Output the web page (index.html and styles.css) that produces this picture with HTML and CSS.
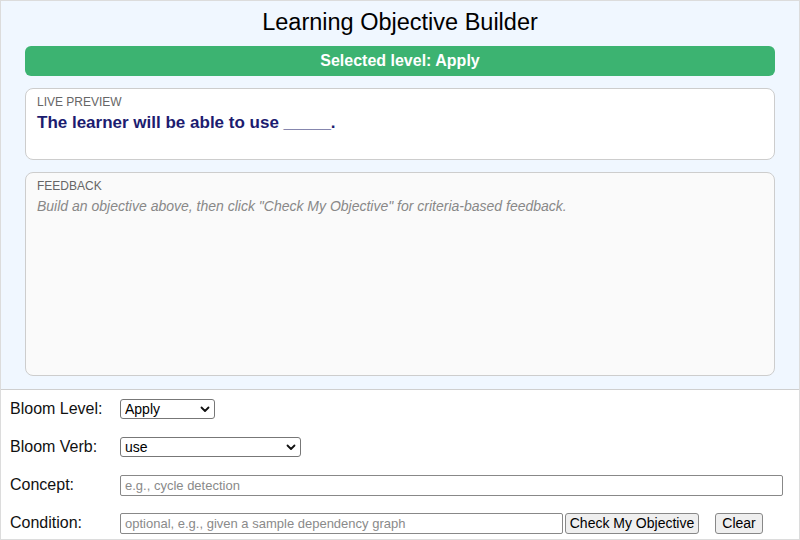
FILE: index.html
```html
<!DOCTYPE html>
<html lang="en">
<head>
  <meta charset="UTF-8">
  <meta name="viewport" content="width=device-width, initial-scale=1.0">
  <title>Learning Objective Builder</title>
  <link rel="stylesheet" href="styles.css">
</head>
<body>
  <div class="app">
    <div class="stage">
      <h1 class="title">Learning Objective Builder</h1>
      <div class="level-bar">Selected level: Apply</div>

      <div class="panel preview">
        <div class="panel-label">LIVE PREVIEW</div>
        <div class="preview-text">The learner will be able to use _____.</div>
      </div>

      <div class="panel feedback">
        <div class="panel-label">FEEDBACK</div>
        <div class="feedback-text">Build an objective above, then click "Check My Objective" for criteria-based feedback.</div>
      </div>
    </div>

    <div class="controls">
      <div class="row">
        <label class="row-label" for="level">Bloom Level:</label>
        <span class="select-wrap level-select">
          <select id="level">
            <option>Apply</option>
          </select>
          <svg class="chevron" width="10" height="7" viewBox="0 0 10 7"><path d="M1.5 1.5 L5 5 L8.5 1.5" fill="none" stroke="#111" stroke-width="1.8" stroke-linecap="round" stroke-linejoin="round"/></svg>
        </span>
      </div>
      <div class="row">
        <label class="row-label" for="verb">Bloom Verb:</label>
        <span class="select-wrap verb-select">
          <select id="verb">
            <option>use</option>
          </select>
          <svg class="chevron" width="10" height="7" viewBox="0 0 10 7"><path d="M1.5 1.5 L5 5 L8.5 1.5" fill="none" stroke="#111" stroke-width="1.8" stroke-linecap="round" stroke-linejoin="round"/></svg>
        </span>
      </div>
      <div class="row">
        <label class="row-label" for="concept">Concept:</label>
        <input type="text" id="concept" class="concept-input" placeholder="e.g., cycle detection">
      </div>
      <div class="row">
        <label class="row-label" for="condition">Condition:</label>
        <input type="text" id="condition" class="condition-input" placeholder="optional, e.g., given a sample dependency graph">
        <button class="check-btn">Check My Objective</button>
        <button class="clear-btn">Clear</button>
      </div>
    </div>
  </div>
</body>
</html>
```

FILE: styles.css
```css
/* General Styles */
* {
  box-sizing: border-box;
}

body {
  margin: 0;
  font-family: "Liberation Sans", Arial, sans-serif;
  background: #ffffff;
}

.app {
  width: 800px;
  height: 540px;
  border: 1px solid #dcdcdc;
  overflow: hidden;
}

/* Top drawing area */
.stage {
  height: 389px;
  background: #f0f7ff;
  border-bottom: 1px solid #cfcfcf;
  padding: 0 24px;
  display: flex;
  flex-direction: column;
}

.title {
  margin: 0;
  height: 45px;
  line-height: 43px;
  text-align: center;
  font-size: 23.5px;
  font-weight: normal;
  color: #000;
}

.level-bar {
  height: 30px;
  line-height: 30px;
  background: #3cb371;
  border-radius: 6px;
  color: #fff;
  font-weight: bold;
  font-size: 16px;
  text-align: center;
}

.panel {
  margin-top: 12px;
  border: 1px solid #cdcdcd;
  border-radius: 8px;
  padding: 6px 11px;
}

.preview {
  height: 72px;
  background: #fff;
}

.feedback {
  height: 204px;
  background: #fafafa;
}

.panel-label {
  font-size: 12px;
  color: #666;
  line-height: 14px;
}

.preview-text {
  margin-top: 4px;
  font-size: 17px;
  font-weight: bold;
  color: #1c1c70;
}

.feedback-text {
  margin-top: 5px;
  font-size: 14px;
  font-style: italic;
  color: #888;
}

/* Controls below */
.controls {
  padding: 0 0 0 9px;
}

.row {
  height: 38px;
  display: flex;
  align-items: center;
}

.row-label {
  width: 110px;
  font-size: 16px;
  color: #111;
}

.select-wrap {
  position: relative;
  display: inline-block;
}

select {
  appearance: none;
  -webkit-appearance: none;
  height: 20px;
  border: 1px solid #777;
  border-radius: 3px;
  background: #fff;
  font-family: "Liberation Sans", Arial, sans-serif;
  font-size: 14px;
  color: #000;
  padding: 0 4px;
}

.level-select select {
  width: 95px;
}

.verb-select select {
  width: 181px;
}

.chevron {
  position: absolute;
  right: 5px;
  top: 7px;
}

input {
  height: 21px;
  border: 1px solid #888;
  border-radius: 2px;
  font-family: "Liberation Sans", Arial, sans-serif;
  font-size: 13px;
  padding: 0 4px;
  background: #fff;
}

input::placeholder {
  color: #8a8a8a;
}

.concept-input {
  width: 663px;
}

.condition-input {
  width: 443px;
}

button {
  height: 21px;
  border: 1px solid #888;
  border-radius: 3px;
  background: #efefef;
  font-family: "Liberation Sans", Arial, sans-serif;
  font-size: 14px;
  color: #000;
  padding: 0;
  white-space: nowrap;
  cursor: pointer;
}

.check-btn {
  margin-left: 2px;
  width: 134px;
}

.clear-btn {
  margin-left: 16px;
  width: 48px;
}
```
